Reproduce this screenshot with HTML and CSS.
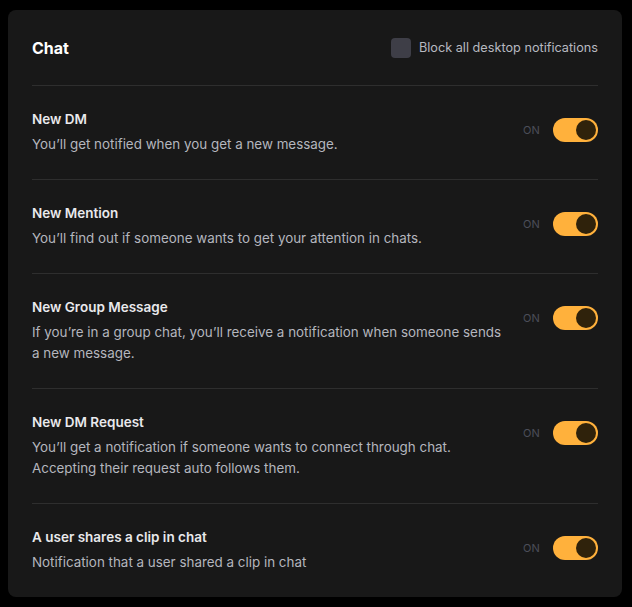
FILE: index.html
```html
<!DOCTYPE html>
<html lang="en">
<head>
<meta charset="utf-8">
<link rel="stylesheet" href="styles.css">
</head>
<body>
<section class="card">
  <header class="card-head">
    <h2 class="title">Chat</h2>
    <label class="block">
      <span class="checkbox"></span>
      <span class="block-text">Block all desktop notifications</span>
    </label>
  </header>
  <div class="row">
    <div class="row-text">
      <div class="row-title">New DM</div>
      <div class="row-desc">You’ll get notified when you get a new message.</div>
    </div>
    <div class="control"><span class="on">ON</span><span class="toggle"><span class="knob"></span></span></div>
  </div>
  <div class="row">
    <div class="row-text">
      <div class="row-title">New Mention</div>
      <div class="row-desc">You’ll find out if someone wants to get your attention in chats.</div>
    </div>
    <div class="control"><span class="on">ON</span><span class="toggle"><span class="knob"></span></span></div>
  </div>
  <div class="row">
    <div class="row-text">
      <div class="row-title">New Group Message</div>
      <div class="row-desc">If you’re in a group chat, you’ll receive a notification when someone sends a new message.</div>
    </div>
    <div class="control"><span class="on">ON</span><span class="toggle"><span class="knob"></span></span></div>
  </div>
  <div class="row">
    <div class="row-text">
      <div class="row-title">New DM Request</div>
      <div class="row-desc">You’ll get a notification if someone wants to connect through chat.<br>Accepting their request auto follows them.</div>
    </div>
    <div class="control"><span class="on">ON</span><span class="toggle"><span class="knob"></span></span></div>
  </div>
  <div class="row">
    <div class="row-text">
      <div class="row-title">A user shares a clip in chat</div>
      <div class="row-desc">Notification that a user shared a clip in chat</div>
    </div>
    <div class="control"><span class="on">ON</span><span class="toggle"><span class="knob"></span></span></div>
  </div>
</section>
</body>
</html>
```
FILE: styles.css
```css
* { box-sizing: border-box; }
html, body { margin: 0; background: #000; }
body {
  padding: 10px 10px 10px 8px;
  font-family: "Inter", "DejaVu Sans", sans-serif;
  color: #e6e6e8;
}
.card {
  width: 614px;
  height: 587px;
  background: #181818;
  border-radius: 8px;
  padding: 0 24px;
}
.card-head {
  display: flex;
  align-items: center;
  justify-content: space-between;
  height: 76px;
  border-bottom: 1px solid #2e2e2e;
}
.title {
  margin: 0;
  font-size: 16px;
  font-weight: 700;
  color: #fff;
}
.block {
  display: flex;
  align-items: center;
  gap: 8px;
}
.checkbox {
  width: 20px;
  height: 20px;
  border-radius: 4px;
  background: #3e3e47;
}
.block-text {
  font-size: 12.7px;
  color: #b7b9c0;
}
.row {
  display: flex;
  align-items: flex-start;
  gap: 12px;
  padding: 24px 0;
  border-bottom: 1px solid #2e2e2e;
}
.row:last-child { border-bottom: none; }
.row-text { flex: 1; min-width: 0; }
.row-title {
  font-size: 13.5px;
  font-weight: 600;
  line-height: 19px;
  color: #e9e9ec;
}
.row-desc {
  margin-top: 5px;
  font-size: 13.4px;
  line-height: 21px;
  color: #b4b6be;
}
.control {
  display: flex;
  align-items: center;
  gap: 13px;
  margin-top: 8px;
}
.on {
  font-size: 11px;
  color: #4c4e58;
  letter-spacing: 0.2px;
}
.toggle {
  display: flex;
  align-items: center;
  justify-content: flex-end;
  width: 45px;
  height: 24px;
  padding: 2px;
  border-radius: 12px;
  background: #ffb13c;
}
.knob {
  width: 20px;
  height: 20px;
  border-radius: 50%;
  background: #2f220b;
}
```
